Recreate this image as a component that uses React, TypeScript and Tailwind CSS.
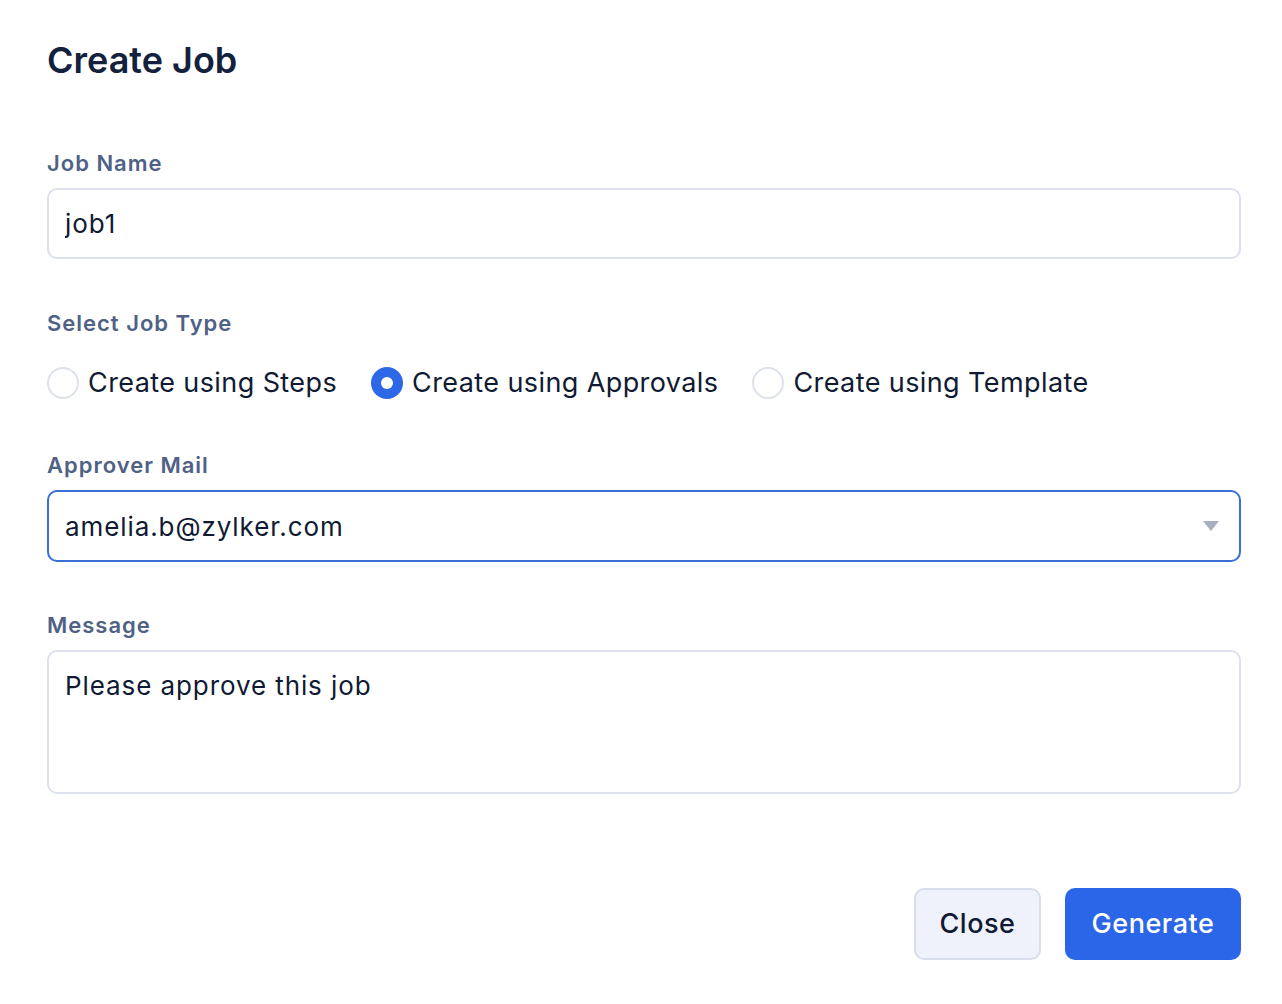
import React, { useState } from 'react';

const font = { fontFamily: 'Inter, "Noto Sans", sans-serif' };

function Radio({ label, checked, onClick }: { label: string; checked: boolean; onClick: () => void }) {
  return (
    <button type="button" onClick={onClick} className="flex items-center gap-[9px]">
      {checked ? (
        <span className="w-[32px] h-[32px] rounded-full bg-[#2d68e6] flex items-center justify-center">
          <span className="w-[12px] h-[12px] rounded-full bg-white" />
        </span>
      ) : (
        <span className="w-[32px] h-[32px] rounded-full border-2 border-[#dde1ea] bg-white" />
      )}
      <span className="text-[27px] leading-[40px] tracking-[0.015em] text-[#101a33]">{label}</span>
    </button>
  );
}

export default function App() {
  const [jobName, setJobName] = useState('job1');
  const [jobType, setJobType] = useState('approvals');
  const [message, setMessage] = useState('Please approve this job');

  return (
    <div style={font} className="min-h-screen bg-white pl-[47px] pr-[41px] pt-[38px] text-[#101a33]">
      <h1 className="text-[36px] leading-[44px] font-semibold text-[#14213d]">Create Job</h1>

      <div className="mt-[67px]">
        <label className="block text-[22px] leading-[28px] font-semibold tracking-[0.045em] text-[#4f6185]">Job Name</label>
        <input
          value={jobName}
          onChange={(e) => setJobName(e.target.value)}
          className="mt-[11px] w-full h-[71px] rounded-[10px] border-2 border-[#dde1ec] px-[16px] text-[26px] tracking-[0.035em] text-[#101a33] outline-none"
        />
      </div>

      <div className="mt-[50px]">
        <label className="block text-[22px] leading-[28px] font-semibold tracking-[0.045em] text-[#4f6185]">Select Job Type</label>
        <div className="mt-[26px] flex items-center gap-[34px]">
          <Radio label="Create using Steps" checked={jobType === 'steps'} onClick={() => setJobType('steps')} />
          <Radio label="Create using Approvals" checked={jobType === 'approvals'} onClick={() => setJobType('approvals')} />
          <Radio label="Create using Template" checked={jobType === 'template'} onClick={() => setJobType('template')} />
        </div>
      </div>

      <div className="mt-[48px]">
        <label className="block text-[22px] leading-[28px] font-semibold tracking-[0.045em] text-[#4f6185]">Approver Mail</label>
        <div className="mt-[11px] h-[72px] rounded-[10px] border-2 border-[#3b6fd8] px-[16px] flex items-center justify-between">
          <span className="text-[26px] tracking-[0.035em]">amelia.b@zylker.com</span>
          <svg width="16" height="10" viewBox="0 0 16 10" className="mr-[4px]">
            <path d="M0 0 H16 L8 10 Z" fill="#a7aec0" />
          </svg>
        </div>
      </div>

      <div className="mt-[49px]">
        <label className="block text-[22px] leading-[28px] font-semibold tracking-[0.045em] text-[#4f6185]">Message</label>
        <textarea
          value={message}
          onChange={(e) => setMessage(e.target.value)}
          className="mt-[11px] block w-full h-[144px] resize-none rounded-[10px] border-2 border-[#dde1ec] px-[16px] py-[16px] text-[26px] leading-[36px] tracking-[0.035em] text-[#101a33] outline-none"
        />
      </div>

      <div className="mt-[94px] flex justify-end gap-[24px]">
        <button className="h-[72px] w-[127px] rounded-[10px] border-2 border-[#d8deeb] bg-[#eff2fa] text-[27px] font-medium tracking-[0.02em] text-[#101a33]">
          Close
        </button>
        <button className="h-[72px] w-[176px] rounded-[10px] bg-[#2b66e8] text-[27px] font-medium tracking-[0.02em] text-white">
          Generate
        </button>
      </div>
    </div>
  );
}
